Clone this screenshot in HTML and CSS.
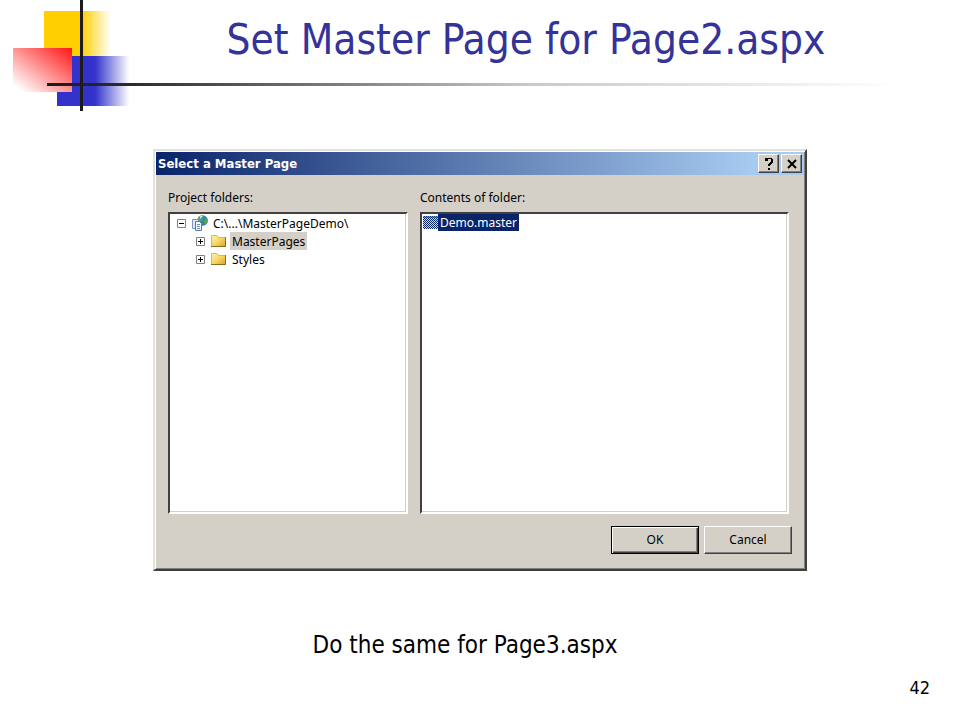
FILE: index.html
```html
<!DOCTYPE html>
<html lang="en">
<head>
    <meta charset="UTF-8">
    <meta name="viewport" content="width=device-width, initial-scale=1.0">
    <title>Set Master Page for Page2.aspx</title>
    <link rel="stylesheet" href="styles.css">
</head>
<body>

    <header class="slide-header">
        <div class="decoration">
            <div class="square yellow"></div>
            <div class="square blue"></div>
            <div class="square red"></div>
            <div class="line-across"></div>
            <div class="line-down"></div>
        </div>
        <h1>Set Master Page for Page2.aspx</h1>
    </header>

    <main>
        <section class="dialog" role="dialog" aria-labelledby="dialog-title">
            <div class="title-bar">
                <h2 id="dialog-title">Select a Master Page</h2>
                <button class="title-button" type="button" aria-label="Help">
                    <svg width="12" height="14" viewBox="0 0 12 14" shape-rendering="crispEdges"><path d="M3 1h6v1h1v4h-1v1h-1v1h-1v1h-2v-2h1v-1h1v-1h1v-3h-3v2h-3v-3h1zM5 11h2v2h-2z"/></svg>
                </button>
                <button class="title-button" type="button" aria-label="Close">
                    <svg width="12" height="14" viewBox="0 0 12 14"><path d="M2 3l8 8M10 3l-8 8" stroke="#000" stroke-width="2"/></svg>
                </button>
            </div>

            <div class="panes">
                <div class="pane folders">
                    <h3 id="folders-label">Project folders:</h3>
                    <ul class="list tree" role="tree" aria-labelledby="folders-label">
                        <li class="row" role="treeitem">
                            <svg class="toggle" width="9" height="9" viewBox="0 0 9 9"><path d="M.5.5h8v8h-8z" fill="#fff" stroke="#808080"/><path d="M2 4.5h5" stroke="#000"/></svg>
                            <svg class="icon" width="16" height="16" viewBox="0 0 16 16">
                                <circle cx="10.500" cy="5.500" r="5.300" fill="#347fc1"/>
                                <path d="M6 3q2-3 5-3l1 2-2 1 1 2-3 2-2-1zM12 5l3-2q2 4-1 6l-2-1z" fill="#55a653"/>
                                <path d="M8 1q2-1 3 0L8 4z" fill="#bce6ed"/>
                                <path d="M.5 4.500h6v9h-6z" fill="#dce9fa" stroke="#7894c4"/>
                                <path d="M3.500 6.500h4l2 2v7h-6z" fill="#f5f9ff" stroke="#5475ae"/>
                                <path d="M5 9.500h3M5 11.500h3M5 13.500h3" stroke="#668fca"/>
                            </svg>
                            <span class="name">C:\...\MasterPageDemo\</span>
                        </li>
                        <li class="row child" role="treeitem" aria-selected="true">
                            <svg class="toggle" width="9" height="9" viewBox="0 0 9 9"><path d="M.5.5h8v8h-8z" fill="#fff" stroke="#808080"/><path d="M2 4.500h5M4.500 2v5" stroke="#000"/></svg>
                            <svg class="icon" width="16" height="16" viewBox="0 0 16 16">
                                <defs>
                                    <linearGradient id="folder" x2="1" y2="1">
                                        <stop stop-color="#fff5ad"/>
                                        <stop offset=".5" stop-color="#f7d768"/>
                                        <stop offset="1" stop-color="#d99b20"/>
                                    </linearGradient>
                                </defs>
                                <path d="M0 2h6l2 2h7v10H0z" fill="url(#folder)"/>
                                <path d="M.5 13.500v-11h5l2 2h7" fill="none" stroke="#d8b65a"/>
                                <path d="M0 13.500h14.500V4" fill="none" stroke="#8f6a23"/>
                            </svg>
                            <span class="name">MasterPages</span>
                        </li>
                        <li class="row child" role="treeitem">
                            <svg class="toggle" width="9" height="9" viewBox="0 0 9 9"><path d="M.5.5h8v8h-8z" fill="#fff" stroke="#808080"/><path d="M2 4.500h5M4.500 2v5" stroke="#000"/></svg>
                            <svg class="icon" width="16" height="16" viewBox="0 0 16 16">
                                <path d="M0 2h6l2 2h7v10H0z" fill="url(#folder)"/>
                                <path d="M.5 13.500v-11h5l2 2h7" fill="none" stroke="#d8b65a"/>
                                <path d="M0 13.500h14.500V4" fill="none" stroke="#8f6a23"/>
                            </svg>
                            <span class="name">Styles</span>
                        </li>
                    </ul>
                </div>

                <div class="pane contents">
                    <h3 id="contents-label">Contents of folder:</h3>
                    <ul class="list files" role="listbox" aria-labelledby="contents-label">
                        <li class="file" role="option" aria-selected="true">
                            <svg width="15" height="15" viewBox="0 0 15 15" shape-rendering="crispEdges">
                                <defs>
                                    <pattern id="dither" width="2" height="2" patternUnits="userSpaceOnUse">
                                        <path d="M0 0h2v2H0z" fill="#c7dcf2"/>
                                        <path d="M0 0h1v1H0zM1 1h1v1H1z" fill="#0a246a"/>
                                    </pattern>
                                </defs>
                                <path d="M0 1h15v13H0z" fill="url(#dither)"/>
                                <path d="M0 1h15v2H0z" fill="#0a5bb0" fill-opacity=".5"/>
                            </svg>
                            <span class="file-name">Demo.master</span>
                        </li>
                    </ul>
                </div>
            </div>

            <div class="buttons">
                <button class="button default" type="button">OK</button>
                <button class="button" type="button">Cancel</button>
            </div>
        </section>

        <p class="note">Do the same for Page3.aspx</p>
    </main>

    <footer class="page-number">42</footer>

</body>
</html>
```
FILE: styles.css
```css
* {
    box-sizing: border-box;
}

body {
    display: flex;
    flex-direction: column;
    min-height: 100vh;
    margin: 0;
    background-color: #ffffff;
    color: #000000;
    font-family: "DejaVu Sans Condensed", "Noto Sans", sans-serif;
}

h1, h2, h3, p, ul {
    margin: 0;
    padding: 0;
}

.slide-header {
    position: relative;
    padding: 16px 0 0 92px;
    height: 112px;
}

.slide-header h1 {
    position: relative;
    color: #333399;
    font-size: 42px;
    font-weight: normal;
    line-height: 48px;
    text-align: center;
}

/* Squares and crossing lines behind the heading */
.decoration {
    position: absolute;
    top: 0;
    left: 0;
    width: 100%;
    height: 100%;
}

.square,
.line-across,
.line-down {
    position: absolute;
}

.yellow {
    top: 11px;
    left: 44px;
    width: 72px;
    height: 46px;
    background: linear-gradient(to right, #ffcf01 52%, #ffffff 93%);
}

.blue {
    top: 56px;
    left: 57px;
    width: 76px;
    height: 50px;
    background: linear-gradient(to right, #3333cc 50%, #ffffff 95%);
}

.red {
    top: 48px;
    left: 13px;
    width: 59px;
    height: 44px;
    background: linear-gradient(to top right, #ffffff 8%, #ff1a1a 98%);
}

.line-across {
    top: 83px;
    left: 47px;
    right: 60px;
    height: 3px;
    background: linear-gradient(to right, #1c1c1c, #2c2c2c 10%, #c8c8c8 56%, #ffffff);
}

.line-down {
    top: 0;
    left: 80px;
    width: 3px;
    height: 111px;
    background-color: #1c1c1c;
}

main {
    display: flex;
    flex-direction: column;
    align-items: center;
    padding-top: 37px;
}

/* Dialog window */
.dialog {
    width: 68%;
    min-width: 654px;
    padding: 1px;
    border: 2px solid;
    border-color: #e4e1db #404040 #404040 #e4e1db;
    box-shadow: inset 1px 1px #ffffff, inset -1px -1px #808080;
    background-color: #d4d0c8;
    font-family: "Noto Sans", "DejaVu Sans Condensed", sans-serif;
    font-size: 12px;
    line-height: 16px;
}

.title-bar {
    display: flex;
    align-items: center;
    height: 23px;
    padding: 0 2px;
    background: linear-gradient(to right, #0a246a, #a6caf0 92%);
    color: #ffffff;
}

.title-bar h2 {
    flex: 1;
    font-family: "DejaVu Sans Condensed", "Noto Sans", sans-serif;
    font-size: 13px;
}

.title-button {
    display: flex;
    align-items: center;
    justify-content: center;
    width: 21px;
    height: 19px;
    margin-left: 2px;
    padding: 0;
    border: 1px solid;
    border-color: #ffffff #404040 #404040 #ffffff;
    box-shadow: inset -1px -1px #808080;
    background-color: #d4d0c8;
}

.panes {
    display: flex;
    gap: 12px;
    padding: 15px 15px 0 12px;
}

.folders {
    flex: 240;
}

.contents {
    flex: 369;
}

.pane h3 {
    margin-bottom: 6px;
    font-size: 12px;
    font-weight: normal;
}

.list {
    height: 302px;
    border: 2px solid;
    border-color: #404040 #ffffff #ffffff #404040;
    box-shadow: inset -1px -1px #d4d0c8;
    background-color: #ffffff;
    list-style: none;
}

.tree {
    padding: 0 7px;
}

.row {
    display: flex;
    align-items: center;
    height: 18px;
}

.child {
    padding-left: 19px;
}

.icon {
    margin-left: 6px;
}

.name {
    margin-left: 3px;
    padding: 2px 2px 0;
}

.row[aria-selected="true"] .name {
    background-color: #d4d0c8;
}

.files {
    padding-left: 1px;
}

.file {
    display: flex;
    align-items: center;
}

.file-name {
    padding: 1px 2px 0;
    background-color: #0a246a;
    color: #ffffff;
}

.buttons {
    display: flex;
    justify-content: flex-end;
    gap: 5px;
    padding: 12px 12px 14px;
}

.button {
    width: 88px;
    height: 28px;
    padding: 0;
    border: 1px solid;
    border-color: #ffffff #404040 #404040 #ffffff;
    box-shadow: inset -1px -1px #808080;
    background-color: #d4d0c8;
    color: #000000;
    font: inherit;
}

.default {
    border-color: #000000;
    box-shadow: inset 1px 1px #ffffff, inset -1px -1px #404040, inset -2px -2px #808080;
}

.note {
    margin-top: 60px;
    padding-right: 30px;
    font-size: 24px;
    line-height: 28px;
}

.page-number {
    margin-top: auto;
    padding: 0 30px 20px;
    font-size: 18px;
    line-height: 24px;
    text-align: right;
}
```
